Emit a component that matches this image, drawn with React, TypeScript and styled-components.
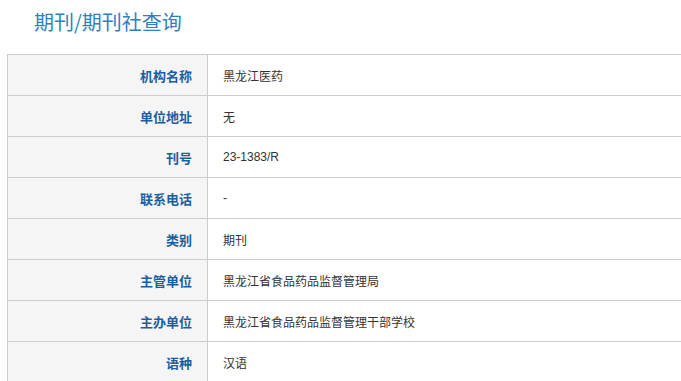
import styled, { createGlobalStyle } from "styled-components";

const GlobalStyle = createGlobalStyle`
  html, body {
    margin: 0;
    padding: 0;
    background: #fff;
  }
  body {
    font-family: "Liberation Sans", Arial, "Noto Sans CJK SC", sans-serif;
  }
`;

const Page = styled.div`
  padding: 0 0 0 7px;
  box-sizing: border-box;
  width: 100%;
`;

const Title = styled.h2`
  margin: 0;
  padding: 10px 0 0 27px;
  height: 54px;
  box-sizing: border-box;
  font-size: 20px;
  font-weight: normal;
  line-height: 24px;
  color: #2f7fc0;
  font-family: "Microsoft YaHei", "Noto Sans CJK SC", sans-serif;
`;

const Table = styled.table`
  width: 100%;
  border-collapse: collapse;
  border-top: 1px solid #ccc;
  border-left: 1px solid #ccc;
`;

const Row = styled.tr`
  height: 41px;
  border-bottom: 1px solid #ccc;
`;

const Label = styled.th`
  width: 200px;
  box-sizing: border-box;
  padding: 0 15px 0 0;
  text-align: right;
  vertical-align: middle;
  background: #f5f5f5;
  border-right: 1px solid #ccc;
  color: #1a5e9f;
  font-size: 13px;
  font-weight: bold;
  font-family: "Noto Sans CJK SC", sans-serif;
`;

const Value = styled.td`
  padding: 0 0 0 15px;
  vertical-align: middle;
  color: #333;
  font-size: 12px;
  font-family: "Liberation Sans", Arial, "Noto Sans CJK SC", sans-serif;
`;

const rows: [string, string][] = [
  ["机构名称", "黑龙江医药"],
  ["单位地址", "无"],
  ["刊号", "23-1383/R"],
  ["联系电话", "-"],
  ["类别", "期刊"],
  ["主管单位", "黑龙江省食品药品监督管理局"],
  ["主办单位", "黑龙江省食品药品监督管理干部学校"],
  ["语种", "汉语"],
];

const App = () => {
  return (
    <>
      <GlobalStyle />
      <Page>
        <Title>期刊/期刊社查询</Title>
        <Table>
          <tbody>
            {rows.map(([label, value]) => (
              <Row key={label}>
                <Label>{label}</Label>
                <Value>{value}</Value>
              </Row>
            ))}
          </tbody>
        </Table>
      </Page>
    </>
  );
};

export default App;
